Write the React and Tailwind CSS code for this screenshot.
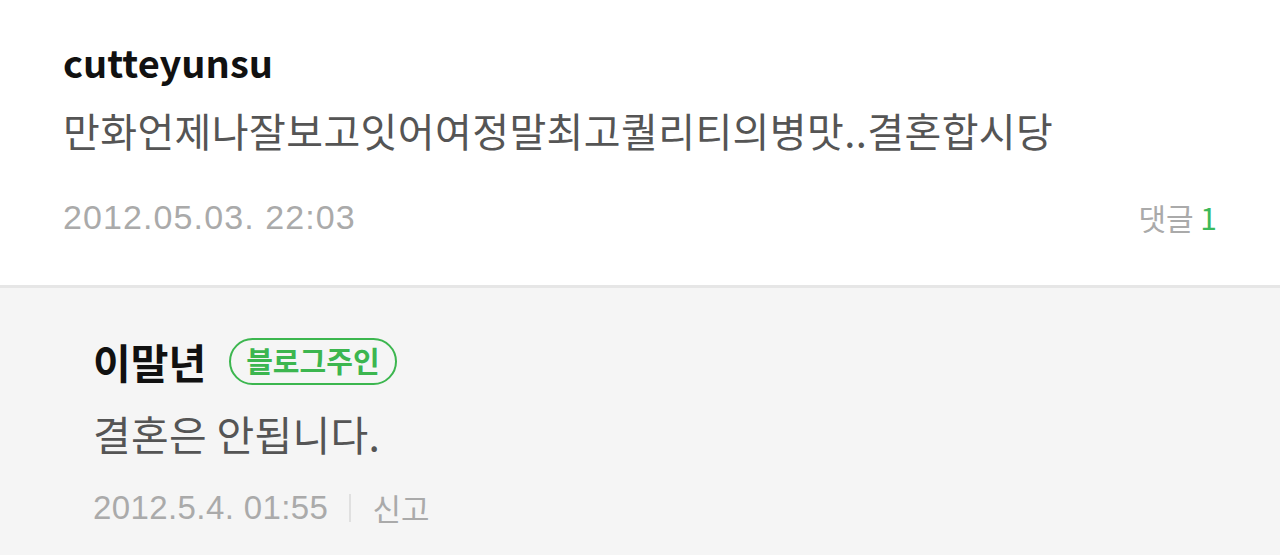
import React from "react";

const kr = { fontFamily: '"Noto Sans CJK KR", "Noto Sans", sans-serif' };

const Comment = () => {
  return (
    <div className="px-[63px] pt-[38px] pb-[48px] bg-white">
      <div className="text-[38px] leading-[48px] font-bold text-[#111]" style={kr}>cutteyunsu</div>
      <div className="text-[40px] leading-[56px] text-[#555] mt-[16px] tracking-[0.4px]" style={kr}>
        만화언제나잘보고잇어여정말최고퀄리티의병맛..결혼합시당
      </div>
      <div className="flex items-center justify-between mt-[39px]">
        <span className="text-[34px] leading-[40px] text-[#aaaaaa] font-['Liberation_Sans',sans-serif] tracking-[1.1px]">
          2012.05.03. 22:03
        </span>
        <span className="text-[30px] leading-[40px] text-[#aaaaaa]" style={kr}>
          댓글 <span className="text-[#3cb95a]">1</span>
        </span>
      </div>
    </div>
  );
};

const Reply = () => {
  return (
    <div className="bg-[#f5f5f5] border-t-[3px] border-[#e6e6e6] pl-[93px] pr-[63px] pt-[48px] pb-[40px]">
      <div className="flex items-center gap-[23px]">
        <span className="text-[41px] leading-[50px] font-bold text-[#111]" style={kr}>이말년</span>
        <span
          className="inline-flex items-center h-[47px] px-[15px] rounded-full border-[2.5px] border-[#3cb64f] text-[#3cb64f] text-[29px] font-bold"
          style={kr}
        >
          블로그주인
        </span>
      </div>
      <div className="text-[41px] leading-[56px] text-[#555] mt-[19px] tracking-[0.3px]" style={kr}>결혼은 안됩니다.</div>
      <div className="flex items-center mt-[27px] text-[#aaaaaa]">
        <span className="text-[33px] leading-[40px] font-['Liberation_Sans',sans-serif] tracking-[0.4px]">2012.5.4. 01:55</span>
        <span className="w-[2px] h-[28px] bg-[#e0e0e0] mx-[21px]"></span>
        <span className="text-[31px] leading-[40px]" style={kr}>신고</span>
      </div>
    </div>
  );
};

export default function App() {
  return (
    <div className="w-[1280px] h-[555px] overflow-hidden bg-[#f5f5f5]">
      <Comment />
      <Reply />
    </div>
  );
}
